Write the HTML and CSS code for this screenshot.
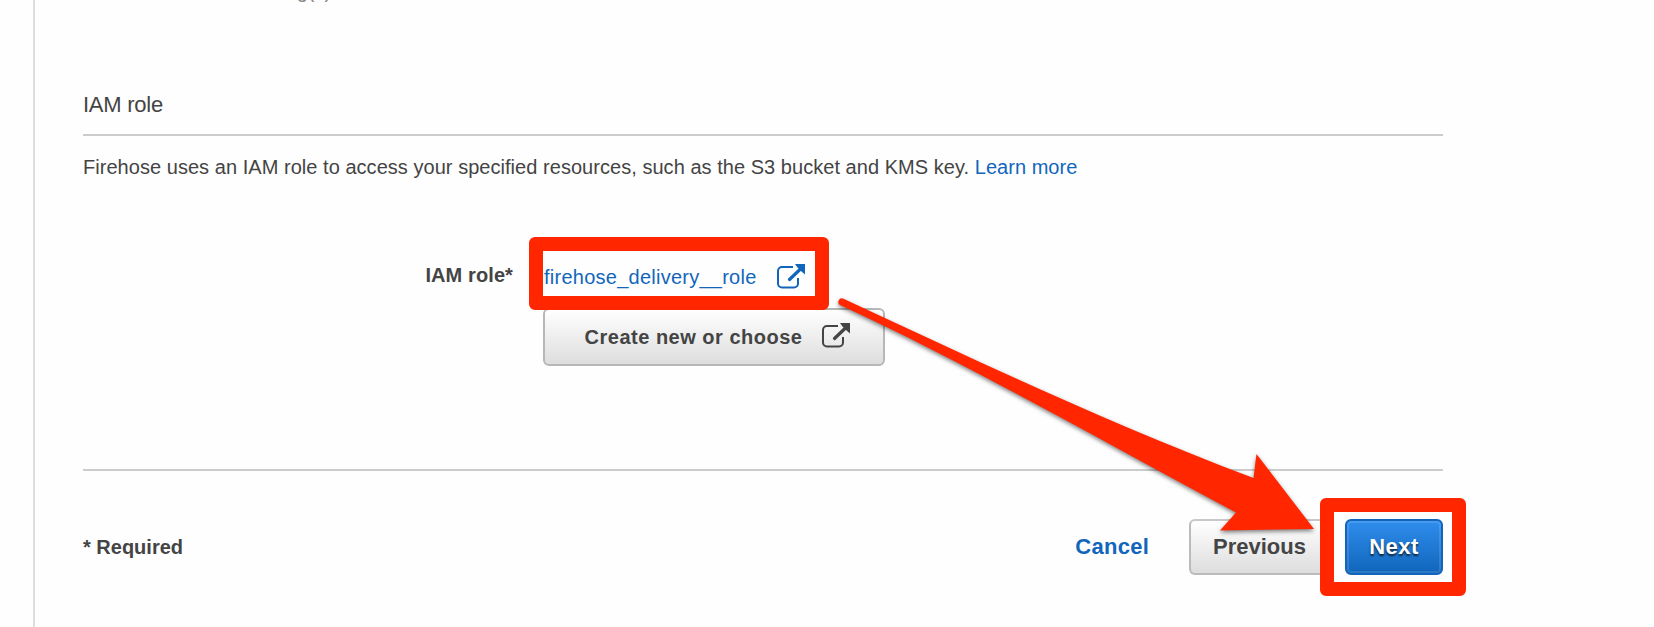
FILE: index.html
```
<!DOCTYPE html>
<html lang="en">
<head>
<meta charset="utf-8">
<title>IAM role</title>
<link rel="stylesheet" href="styles.css">
</head>
<body>
<main class="panel">
  <p class="hint">tag(s)</p>
  <section class="role">
    <h2 class="role-title">IAM role</h2>
    <p class="role-text">Firehose uses an IAM role to access your specified resources, such as the S3 bucket and KMS key. <a class="link">Learn more</a></p>
    <div class="field">
      <span class="field-label">IAM role*</span>
      <div class="field-body">
        <a class="link role-link"><span>firehose_delivery__role</span>
          <svg class="icon" viewBox="0 0 28 25"><path d="M16 3H5a4 4 0 0 0-4 4v12.500a4 4 0 0 0 4 4h12a4 4 0 0 0 4-4v-5.500" fill="none" stroke="currentColor" stroke-width="2"/><path d="M12.500 15.500 24 4.500" stroke="currentColor" stroke-width="3.200" fill="none" stroke-linecap="round"/><path d="M18 0H28v10.500l-3.500-3-4-4z" fill="currentColor"/></svg>
        </a>
        <button class="button create"><span>Create new or choose</span>
          <svg class="icon" viewBox="0 0 28 25"><path d="M16 3H5a4 4 0 0 0-4 4v12.500a4 4 0 0 0 4 4h12a4 4 0 0 0 4-4v-5.500" fill="none" stroke="currentColor" stroke-width="2"/><path d="M12.500 15.500 24 4.500" stroke="currentColor" stroke-width="3.200" fill="none" stroke-linecap="round"/><path d="M18 0H28v10.500l-3.500-3-4-4z" fill="currentColor"/></svg>
        </button>
        <span class="mark mark-role"></span>
      </div>
    </div>
  </section>
  <footer class="footer">
    <span class="required">* Required</span>
    <a class="link cancel">Cancel</a>
    <button class="button previous">Previous</button>
    <div class="next-wrap"><button class="button next">Next</button><span class="mark mark-next"></span></div>
  </footer>
</main>
<svg class="arrow" viewBox="0 0 1654 627"><path d="M843.500 298.700C980 362 1110 424 1253.500 478L1256.500 454 1314 529 1220 530.400 1236 512.500C1100 440 970 365 840.500 305.300A3.500 3.500 0 0 1 843.500 298.700Z" fill="#ff2600"/></svg>
</body>
</html>
```
FILE: styles.css
```
* { box-sizing: border-box; }
body {
  margin: 0;
  height: 627px;
  overflow: hidden;
  background: #fefefe;
  color: #444;
  font: 20px/24px "Liberation Sans", Arial, sans-serif;
}
h2, p { margin: 0; font-weight: 400; }
.panel {
  display: flex;
  flex-direction: column;
  height: 627px;
  margin-left: 33px;
  padding: 0 211px 0 48px;
  border-left: 2px solid #ddd;
}
.hint { flex: none; height: 22px; margin: -21px 0 2px 197px; color: #888; }
.role { flex: none; height: 468px; border-bottom: 2px solid #ccc; }
.role-title { height: 133px; padding-top: 89px; border-bottom: 2px solid #ccc; font-size: 22px; line-height: 26px; letter-spacing: -.25px; }
.link { color: #1166bb; }
.role-text { padding-top: 19px; white-space: nowrap; letter-spacing: .04px; }
.field { display: flex; margin-top: 57px; }
.field-label { width: 430px; padding-top: 27px; text-align: right; font-weight: 700; letter-spacing: .1px; }
.field-body { position: relative; margin-left: 30px; }
.role-link { display: flex; gap: 20px; padding: 29px 0 0 1px; height: 72px; letter-spacing: .25px; }
.role-link .icon { margin-top: -1px; }
.icon { width: 28px; height: 25px; flex: none; }
.button {
  display: flex;
  align-items: center;
  justify-content: center;
  border: 2px solid #b7b7b7;
  border-radius: 6px;
  background: linear-gradient(#fff, #ddd);
  color: #444;
  font: 700 22px/26px "Liberation Sans", Arial, sans-serif;
  padding: 0;
}
.create { width: 342px; height: 58px; padding: 0 0 1px 7px; gap: 20px; font-size: 20px; letter-spacing: .5px; }
.create .icon { margin-top: -2px; }
.mark { position: absolute; border: 14px solid #ff2600; border-radius: 6px; }
.mark-role { left: -14px; top: 1px; width: 300px; height: 73px; }
.footer { display: flex; align-items: center; flex: none; padding-top: 47px; height: 104px; }
.required { flex: 1; padding-top: 1px; font-weight: 700; }
.cancel { margin-right: 40px; padding-top: 1px; font-size: 22px; font-weight: 700; letter-spacing: .25px; }
.previous { width: 141px; height: 56px; padding-top: 1px; border-color: #c8c8c8 #bbb #bbb; }
.next-wrap { position: relative; margin-left: 15px; }
.next {
  width: 98px;
  height: 56px;
  padding-top: 1px;
  border-color: #1166bb;
  background: linear-gradient(#2f8ded, #1166bb);
  box-shadow: inset 0 0 0 2px rgba(255, 255, 255, .12);
  color: #fff;
  letter-spacing: .5px;
  text-shadow: 0 2px 2px #123;
}
.mark-next { left: -25px; top: -21px; width: 146px; height: 98px; }
.arrow {
  position: absolute;
  left: 0;
  top: 0;
  width: 1654px;
  height: 627px;
  pointer-events: none;
  filter: drop-shadow(0 2px 2px rgba(0, 0, 0, .5));
}
```
